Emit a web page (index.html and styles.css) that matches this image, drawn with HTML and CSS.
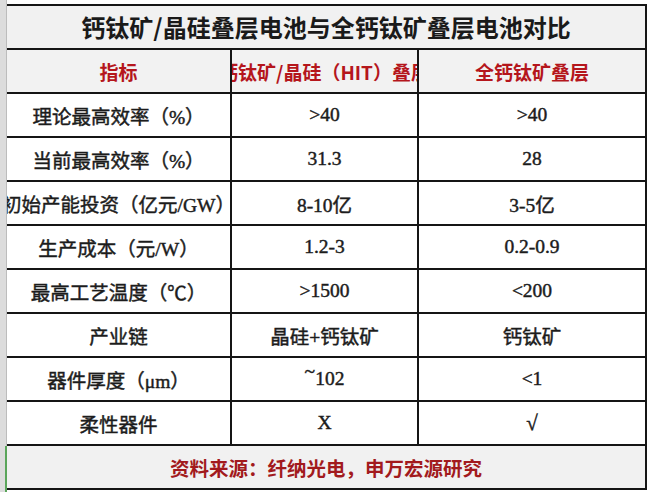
FILE: index.html
```html
<!DOCTYPE html>
<html lang="zh-CN">
<head>
<meta charset="utf-8">
<title>钙钛矿/晶硅叠层电池与全钙钛矿叠层电池对比</title>
<link rel="stylesheet" href="styles.css">
</head>
<body>
<div class="page">
  <div class="gutter"><div class="gutter-sel"></div></div>
  <div class="wrap">
    <div class="sheet">
      <div class="cell title span3">钙钛矿/晶硅叠层电池与全钙钛矿叠层电池对比</div>

      <div class="cell head">指标</div>
      <div class="cell head">钙钛矿/晶硅（HIT）叠层</div>
      <div class="cell head">全钙钛矿叠层</div>

      <div class="cell">理论最高效率（%）</div>
      <div class="cell">&gt;40</div>
      <div class="cell">&gt;40</div>

      <div class="cell">当前最高效率（%）</div>
      <div class="cell">31.3</div>
      <div class="cell">28</div>

      <div class="cell">初始产能投资（亿元/GW）</div>
      <div class="cell">8-10亿</div>
      <div class="cell">3-5亿</div>

      <div class="cell">生产成本（元/W）</div>
      <div class="cell">1.2-3</div>
      <div class="cell">0.2-0.9</div>

      <div class="cell">最高工艺温度（℃）</div>
      <div class="cell">&gt;1500</div>
      <div class="cell">&lt;200</div>

      <div class="cell">产业链</div>
      <div class="cell">晶硅+钙钛矿</div>
      <div class="cell">钙钛矿</div>

      <div class="cell">器件厚度（μm）</div>
      <div class="cell"><span class="tilde">~</span>102</div>
      <div class="cell">&lt;1</div>

      <div class="cell">柔性器件</div>
      <div class="cell">X</div>
      <div class="cell check">√</div>

      <div class="cell source span3">资料来源：纤纳光电，申万宏源研究</div>
    </div>
  </div>
</div>
</body>
</html>
```

FILE: styles.css
```css
html, body {
  margin: 0;
  padding: 0;
  background: #ffffff;
}

.page {
  display: flex;
  width: 649px;
  height: 492px;
  overflow: hidden;
}

.gutter {
  position: relative;
  width: 6px;
  flex: 0 0 6px;
  background: #dcdcdc;
  border-right: 1px solid #bcbcbc;
}

.gutter-sel {
  position: absolute;
  left: 5px;
  top: 446px;
  width: 2px;
  height: 46px;
  background: #5aa55a;
}

.wrap {
  padding-top: 4px;
}

.sheet {
  display: grid;
  grid-template-columns: 225px 187px 228px;
  grid-auto-rows: 44px;
  border-top: 2px solid #151515;
}

.cell {
  display: flex;
  align-items: center;
  justify-content: center;
  overflow: hidden;
  white-space: nowrap;
  border-right: 2px solid #151515;
  border-bottom: 2px solid #151515;
  box-sizing: border-box;
  font-family: "Liberation Serif", "Noto Sans CJK SC", serif;
  font-size: 19.5px;
  font-weight: 400;
  color: #1c1c1c;
  -webkit-text-stroke: 0.45px #1c1c1c;
  background: #ffffff;
}

.span3 {
  grid-column: 1 / 4;
}

.title {
  background: #f1f1f1;
  font-family: "Noto Sans CJK SC", sans-serif;
  font-weight: 700;
  font-size: 24px;
  color: #1a1a1a;
  -webkit-text-stroke: 0;
  padding-bottom: 2px;
}

.head {
  background: #f2f2f2;
  font-family: "Noto Sans CJK SC", sans-serif;
  font-weight: 700;
  font-size: 19px;
  color: #b5161c;
  -webkit-text-stroke: 0;
}

.source {
  background: #f1f1f1;
  font-weight: 700;
  font-size: 19.5px;
  color: #a21a1d;
  -webkit-text-stroke: 0;
}

.tilde {
  position: relative;
  top: -7px;
}

.check {
  font-weight: 700;
  font-size: 21px;
  padding-top: 1px;
}
```
